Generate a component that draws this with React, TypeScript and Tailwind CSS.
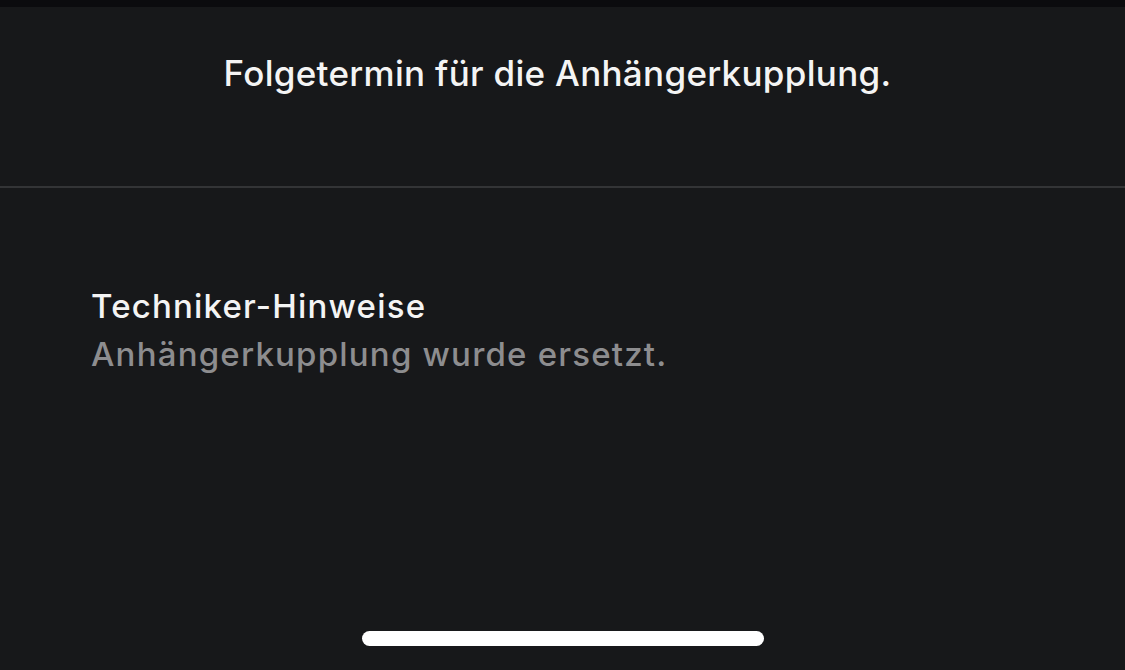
import React from "react";

export default function App() {
  return (
    <div
      className="w-[1125px] h-[670px] bg-[#17181a] flex flex-col overflow-hidden"
      style={{ fontFamily: 'Inter, "Liberation Sans", Arial, sans-serif' }}
    >
      <div className="h-[7px] bg-[#0b0b0e] shrink-0" />
      <div className="h-[179px] shrink-0 flex justify-center pt-[36px] pr-[10px]">
        <h1 className="text-[35px] leading-[60px] text-[#f4f4f4] font-medium tracking-[0.3px]">
          Folgetermin für die Anhängerkupplung.
        </h1>
      </div>
      <div className="h-[2px] bg-[#333436] shrink-0" />
      <div className="flex-1 flex flex-col pl-[91px] pt-[94px]">
        <div className="text-[33px] leading-[48px] text-[#f4f4f4] font-medium tracking-[1.2px]">
          Techniker-Hinweise
        </div>
        <div className="text-[33px] leading-[48px] text-[#8d8d8f] font-medium tracking-[1.2px]">
          Anhängerkupplung wurde ersetzt.
        </div>
      </div>
      <div className="shrink-0 flex justify-center pb-[24px]">
        <div className="w-[402px] h-[15px] rounded-full bg-white" />
      </div>
    </div>
  );
}
